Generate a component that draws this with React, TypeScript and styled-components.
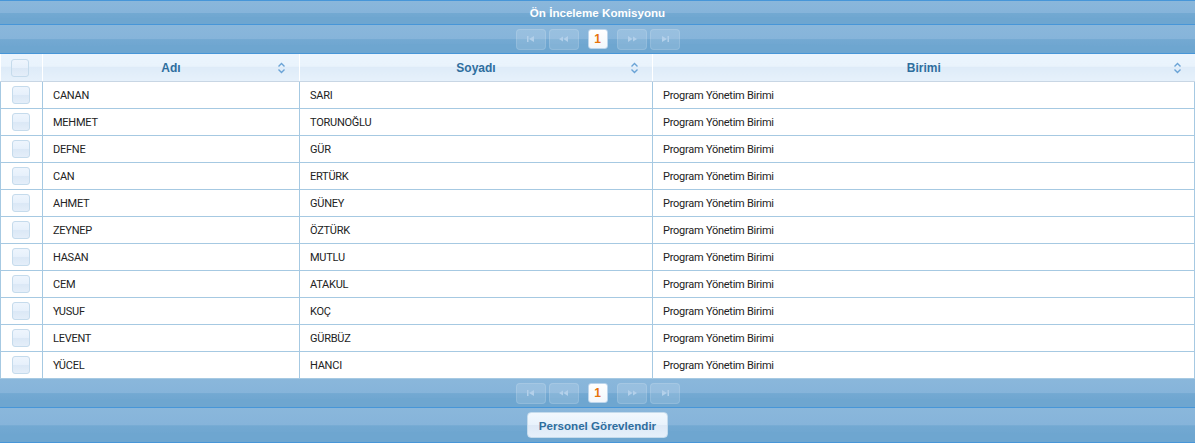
import styled, { createGlobalStyle } from 'styled-components';

const GlobalStyle = createGlobalStyle`
  html, body {
    margin: 0;
    padding: 0;
    background: #ffffff;
  }
  body {
    font-family: 'Liberation Sans', Arial, sans-serif;
  }
`;

const rows = [
  ['CANAN', 'SARI'],
  ['MEHMET', 'TORUNOĞLU'],
  ['DEFNE', 'GÜR'],
  ['CAN', 'ERTÜRK'],
  ['AHMET', 'GÜNEY'],
  ['ZEYNEP', 'ÖZTÜRK'],
  ['HASAN', 'MUTLU'],
  ['CEM', 'ATAKUL'],
  ['YUSUF', 'KOÇ'],
  ['LEVENT', 'GÜRBÜZ'],
  ['YÜCEL', 'HANCI'],
];

const wave = `
  background-color: #77abd4;
  background-image:
    radial-gradient(140% 60% at 50% 105%, #6ea6d0 0%, #6ea6d0 60%, rgba(110, 166, 208, 0) 61%),
    linear-gradient(to bottom, #8ab7db 0%, #86b4da 50%, #73a9d2 52%, #6ba3cf 100%);
`;

type SeekKind = 'first' | 'prev' | 'next' | 'end';

function SeekIcon({ kind }: { kind: SeekKind }) {
  const c = '#b3d0ea';
  if (kind === 'first')
    return (
      <svg width="10" height="8" viewBox="0 0 10 8">
        <rect x="1" y="1" width="1.5" height="6" fill={c} />
        <path d="M3 4 L8 1 L8 7 Z" fill={c} />
      </svg>
    );
  if (kind === 'end')
    return (
      <svg width="10" height="8" viewBox="0 0 10 8">
        <path d="M2 1 L7 4 L2 7 Z" fill={c} />
        <rect x="7.5" y="1" width="1.5" height="6" fill={c} />
      </svg>
    );
  if (kind === 'prev')
    return (
      <svg width="12" height="8" viewBox="0 0 12 8">
        <path d="M1 4 L5 1.5 L5 6.5 Z" fill={c} />
        <path d="M5.5 4 L10 1 L10 7 Z" fill={c} />
      </svg>
    );
  return (
    <svg width="12" height="8" viewBox="0 0 12 8">
      <path d="M2 1 L6.5 4 L2 7 Z" fill={c} />
      <path d="M7 1.5 L11 4 L7 6.5 Z" fill={c} />
    </svg>
  );
}

function SortIcon() {
  return (
    <svg width="9" height="12" viewBox="0 0 9 12">
      <path d="M1.5 4.5 L4.5 1.5 L7.5 4.5" fill="none" stroke="#6aa3d6" strokeWidth="1.4" />
      <path d="M1.5 7.5 L4.5 10.5 L7.5 7.5" fill="none" stroke="#6aa3d6" strokeWidth="1.4" />
    </svg>
  );
}

function Paginator() {
  return (
    <PagerBar>
      <NavButton>
        <SeekIcon kind="first" />
      </NavButton>
      <NavButton>
        <SeekIcon kind="prev" />
      </NavButton>
      <PageButton>1</PageButton>
      <NavButton>
        <SeekIcon kind="next" />
      </NavButton>
      <NavButton>
        <SeekIcon kind="end" />
      </NavButton>
    </PagerBar>
  );
}

export default function App() {
  return (
    <>
      <GlobalStyle />
      <Panel>
        <Caption>Ön İnceleme Komisyonu</Caption>
        <Paginator />
        <Grid>
          <colgroup>
            <col style={{ width: 42 }} />
            <col style={{ width: 257 }} />
            <col style={{ width: 353 }} />
            <col />
          </colgroup>
          <thead>
            <tr>
              <HeadCell>
                <Check />
              </HeadCell>
              <HeadCell>
                Adı
                <SortSlot>
                  <SortIcon />
                </SortSlot>
              </HeadCell>
              <HeadCell>
                Soyadı
                <SortSlot>
                  <SortIcon />
                </SortSlot>
              </HeadCell>
              <HeadCell>
                Birimi
                <SortSlot>
                  <SortIcon />
                </SortSlot>
              </HeadCell>
            </tr>
          </thead>
          <tbody>
            {rows.map(([ad, soyad]) => (
              <tr key={ad}>
                <Cell $check>
                  <Check />
                </Cell>
                <Cell>{ad}</Cell>
                <Cell>{soyad}</Cell>
                <Cell>Program Yönetim Birimi</Cell>
              </tr>
            ))}
          </tbody>
        </Grid>
        <Paginator />
        <Footer>
          <ActionButton>Personel Görevlendir</ActionButton>
        </Footer>
      </Panel>
    </>
  );
}

const Panel = styled.div`
  width: 1195px;
  box-sizing: border-box;
  border-top: 1px solid #4796d8;
  border-bottom: 1px solid #4796d8;
`;

const Caption = styled.div`
  ${wave}
  height: 23px;
  border-bottom: 1px solid #4796d8;
  display: flex;
  align-items: center;
  justify-content: center;
  color: #ffffff;
  font-size: 11.6px;
  font-weight: bold;
`;

const PagerBar = styled.div`
  ${wave}
  height: 28px;
  border-bottom: 1px solid #4796d8;
  display: flex;
  align-items: center;
  justify-content: center;
  gap: 3px;
`;

const NavButton = styled.div`
  width: 28px;
  height: 19px;
  border: 1px solid rgba(255, 255, 255, 0.12);
  background: rgba(255, 255, 255, 0.14);
  border-radius: 4px;
  display: flex;
  align-items: center;
  justify-content: center;
`;

const PageButton = styled.div`
  width: 18px;
  height: 18px;
  margin: 0 6px;
  background: linear-gradient(to bottom, #ffffff, #f3f7fb);
  border: 1px solid #bcd5ec;
  border-radius: 3px;
  display: flex;
  align-items: center;
  justify-content: center;
  color: #e7730b;
  font-size: 12px;
  font-weight: bold;
`;

const Grid = styled.table`
  width: 100%;
  table-layout: fixed;
  border-collapse: collapse;
`;

const HeadCell = styled.th`
  position: relative;
  height: 27px;
  padding: 0;
  background: linear-gradient(to bottom, #ebf4fd 0%, #e9f3fc 45%, #deebf8 50%, #e6f1fb 100%);
  border-bottom: 1px solid #c8d6e4;
  color: #2e6e9e;
  font-weight: bold;
  font-size: 12px;
  text-align: center;
  &:not(:first-child) {
    border-left: 1px solid #ffffff;
  }
`;

const SortSlot = styled.span`
  position: absolute;
  right: 13px;
  top: 8px;
  display: flex;
`;

const Cell = styled.td<{ $check?: boolean }>`
  height: 26px;
  padding: ${(p) => (p.$check ? '0' : '0 10px')};
  border: 1px solid #a6c9e2;
  border-top: none;
  color: #222222;
  font-family: Roboto, 'Liberation Sans', Arial, sans-serif;
  font-size: 11px;
  letter-spacing: -0.25px;
  text-align: ${(p) => (p.$check ? 'center' : 'left')};
  white-space: nowrap;
`;

const Check = styled.div`
  width: 16px;
  height: 16px;
  margin: 0 auto;
  border: 1px solid #c5dbec;
  border-radius: 3px;
  background: linear-gradient(to bottom, #eef5fd 0%, #e6f0fb 50%, #dbe8f6 52%, #e4eef9 100%);
  position: relative;
  left: -1px;
`;

const Footer = styled.div`
  ${wave}
  height: 34px;
  display: flex;
  align-items: center;
  justify-content: center;
`;

const ActionButton = styled.button`
  width: 141px;
  height: 26px;
  padding: 0;
  border: 1px solid #c5dbec;
  border-radius: 4px;
  background: linear-gradient(to bottom, #f2f8fe 0%, #e8f2fc 50%, #dde9f6 52%, #e6f0fb 100%);
  color: #2e6e9e;
  font-family: 'Liberation Sans', Arial, sans-serif;
  font-size: 11.6px;
  font-weight: bold;
  cursor: pointer;
`;
